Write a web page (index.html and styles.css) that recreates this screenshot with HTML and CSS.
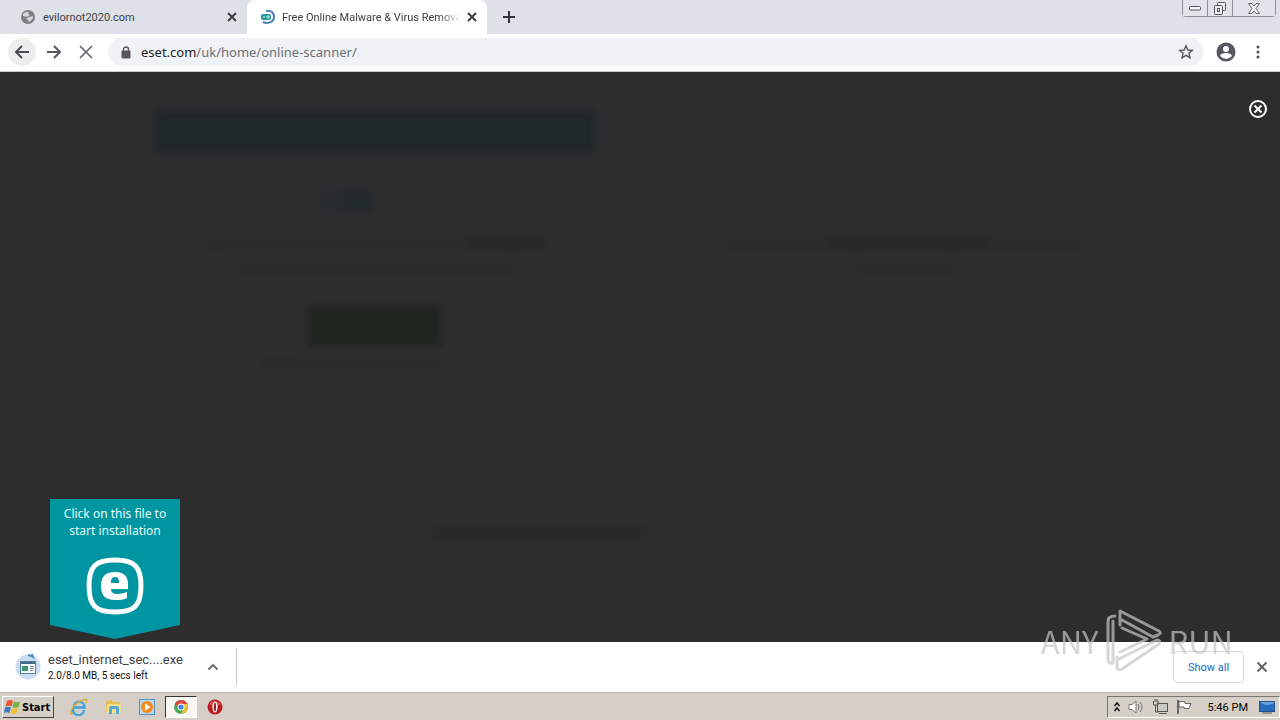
FILE: index.html
```html
<!DOCTYPE html>
<html lang="en">
<head>
<meta charset="utf-8">
<title>Free Online Malware &amp; Virus Removal</title>
<link rel="stylesheet" href="styles.css">
</head>
<body>
<header class="tabs">
  <div class="tab">
    <svg class="favicon" width="16" height="16" viewBox="0 0 16 16"><circle cx="8" cy="8" r="7" fill="#7b7f84"/><path d="M3 5Q6 2 9 3L8 5L10 6L7 8L3 7ZM9 8L13 7Q13 11 9 13L8 11L6 10Z" fill="#d5d8dc"/></svg>
    <span class="tab-title">evilornot2020.com</span>
    <button class="plain" aria-label="Close tab"><svg width="10" height="10" viewBox="0 0 10 10"><path d="M1 1L9 9M9 1L1 9" stroke="#3c4043" stroke-width="2"/></svg></button>
  </div>
  <div class="tab active">
    <svg class="favicon" width="16" height="16" viewBox="0 0 16 16"><rect x="1" y="5" width="10" height="6" rx="2" fill="#2a9aa0"/><path d="M3 8H5M7 7H9V9H7Z" stroke="#c5eceb" fill="none"/><path d="M6 2Q14 1 14 8Q14 14 6 14L3 13" stroke="#477fba" stroke-width="2" fill="none"/></svg>
    <span class="tab-title fade">Free Online Malware &amp; Virus Remova</span>
    <button class="plain" aria-label="Close tab"><svg width="10" height="10" viewBox="0 0 10 10"><path d="M1 1L9 9M9 1L1 9" stroke="#3c4043" stroke-width="2"/></svg></button>
  </div>
  <button class="plain new-tab" aria-label="New tab"><svg width="12" height="12" viewBox="0 0 12 12"><path d="M6 0V12M0 6H12" stroke="#30343a" stroke-width="2"/></svg></button>
  <div class="window-buttons">
    <button aria-label="Minimize"><svg width="12" height="6" viewBox="0 0 12 6"><rect x=".5" y="1.500" width="11" height="3.500" rx="1" fill="#f6f7f9" stroke="#50545c"/></svg></button>
    <button aria-label="Restore"><svg width="14" height="13" viewBox="0 0 14 13"><g fill="#eceef2" stroke="#50545c"><rect x="4.500" y=".5" width="8" height="8" rx="1"/><rect x="1.500" y="3.500" width="8" height="9" rx="1"/><rect x="4.500" y="6.500" width="2" height="3"/></g></svg></button>
    <button class="wide" aria-label="Close"><svg width="12" height="11" viewBox="0 0 12 11"><path d="M.5.5H4L6 3L8 .5H11.500L8 5.500L11.500 10.500H8L6 8L4 10.500H.5L4 5.500Z" fill="#f6f7f9" stroke="#666a72"/></svg></button>
  </div>
</header>
<nav class="toolbar">
  <button class="plain round" aria-label="Back"><svg width="16" height="16" viewBox="0 0 16 16"><path d="M15 8H2M8 2L2 8L8 14" stroke="#494c50" stroke-width="2" fill="none"/></svg></button>
  <button class="plain nav" aria-label="Forward"><svg width="16" height="16" viewBox="0 0 16 16"><path d="M1 8H14M8 2L14 8L8 14" stroke="#55585c" stroke-width="2" fill="none"/></svg></button>
  <button class="plain nav" aria-label="Stop"><svg width="14" height="14" viewBox="0 0 14 14"><path d="M1 1L13 13M13 1L1 13" stroke="#5f6368" stroke-width="1.600"/></svg></button>
  <a class="address" href="#">
    <svg width="10" height="13" viewBox="0 0 10 13"><path d="M2.500 6V3.500a2.500 2.500 0 015 0V6" stroke="#55585d" stroke-width="1.400" fill="none"/><rect x=".5" y="4.500" width="9" height="8" rx="1" fill="#55585d"/></svg>
    <span class="url"><span class="host">eset.com</span>/uk/home/online-scanner/</span>
    <svg width="16" height="16" viewBox="0 0 16 16"><path d="M8 1.800L9.800 6L14.300 6.300L10.900 9.200L12 13.800L8 11.300L4 13.800L5.100 9.200L1.700 6.300L6.200 6Z" stroke="#55585d" stroke-width="1.400" fill="none"/></svg>
  </a>
  <button class="plain" aria-label="Profile"><svg width="20" height="20" viewBox="0 0 20 20"><circle cx="10" cy="10" r="9.500" fill="#55585f"/><circle cx="10" cy="7" r="3" fill="#fff"/><path d="M4 14Q5 11 10 11Q15 11 16 14Q13 17 10 17Q7 17 4 14Z" fill="#fff"/></svg></button>
  <button class="plain menu" aria-label="Menu"><svg width="4" height="14" viewBox="0 0 4 14"><g fill="#4d5055"><circle cx="2" cy="2" r="1.500"/><circle cx="2" cy="7" r="1.500"/><circle cx="2" cy="12" r="1.500"/></g></svg></button>
</nav>
<main class="page">
  <div class="dimmed" aria-hidden="true">
    <section class="column">
      <div class="banner"></div>
      <div class="logo-shape"></div>
      <div class="line w340"><i></i></div>
      <div class="line w280"></div>
      <div class="cta"></div>
      <div class="line w180"></div>
    </section>
    <section class="column right">
      <div class="line w360"><i></i></div>
      <div class="line w100"></div>
      <div class="outline"></div>
    </section>
    <div class="line footer-line"></div>
  </div>
  <button class="plain close-overlay" aria-label="Close"><svg width="20" height="20" viewBox="0 0 20 20"><circle cx="10" cy="10" r="8" stroke="#fff" stroke-width="2" fill="none"/><path d="M6.500 6.500L13.500 13.500M13.500 6.500L6.500 13.500" stroke="#fff" stroke-width="2"/></svg></button>
  <aside class="hint">
    <p>Click on this file to start installation</p>
    <svg width="58" height="58" viewBox="0 0 58 58"><path d="M29 3C48 3 55 9 55 29C55 49 48 55 29 55C10 55 3 49 3 29C3 9 10 3 29 3Z" fill="none" stroke="#fff" stroke-width="5"/><path fill-rule="evenodd" d="M29 15C39 15 43 20 42 32H25C25 36 28 37 32 37C35 37 38 36 41 35V41C37 43 34 43 29 43C19 43 15 38 15 29C15 19 20 15 29 15ZM25 26H33C33 22 32 20 29 20C26 20 25 22 25 26Z" fill="#fff"/></svg>
  </aside>
</main>
<section class="downloads">
  <svg class="file-icon" width="26" height="28" viewBox="0 0 26 28"><circle cx="13" cy="14" r="12.500" fill="#ccdcf2"/><path d="M13 2A12 12 0 0118 4L17 1" stroke="#4b8fc6" stroke-width="2" fill="none"/><rect x="5.500" y="8.500" width="15" height="12" fill="#f9fbfa" stroke="#587e92"/><path d="M6 10H20" stroke="#426985" stroke-width="2"/><rect x="7" y="13" width="6" height="5" fill="#3c9872"/><path d="M15 13.500H19M15 15.500H19M15 17.500H18" stroke="#8292a0"/></svg>
  <div class="file">
    <span class="file-name">eset_internet_sec....exe</span>
    <span class="file-status">2.0/8.0 MB, 5 secs left</span>
  </div>
  <button class="plain expand" aria-label="Download options"><svg width="12" height="8" viewBox="0 0 12 8"><path d="M1.500 6.500L6 2L10.500 6.500" stroke="#6c6f73" stroke-width="2" fill="none"/></svg></button>
  <button class="show-all">Show all</button>
  <button class="plain" aria-label="Close downloads"><svg width="12" height="12" viewBox="0 0 12 12"><path d="M1.500 1.500L10.500 10.500M10.500 1.500L1.500 10.500" stroke="#5f6368" stroke-width="2"/></svg></button>
</section>
<footer class="taskbar">
  <button class="start"><svg width="17" height="16" viewBox="0 0 17 16"><path d="M3 2Q6 0 9 2L7.500 7.500Q4.500 6 1.500 7.500Z" fill="#e7582b"/><path d="M10 2.500Q13 4 16 2.500L14.500 8Q11.500 9.500 8.500 8Z" fill="#72b43b"/><path d="M1 8.500Q4 7 7 8.500L5.500 14Q3 12.500 0 14Z" fill="#3c7cc8"/><path d="M8 9Q11 10.500 14 9L12.500 14Q9.500 16 6.500 14Z" fill="#f5bd2b"/></svg>Start</button>
  <div class="launchers">
    <button class="plain app" aria-label="Internet Explorer"><svg width="18" height="18" viewBox="0 0 18 18"><path d="M14 12A5.500 5.500 0 113.500 9.500H14.500A5.500 5.500 0 003.800 7.500" stroke="#3da4de" stroke-width="2.400" fill="none"/><path d="M3 15Q0 18 1 13Q4 5 13 2Q19 0 16 5" stroke="#d9ac35" stroke-width="1.400" fill="none"/></svg></button>
    <button class="plain app" aria-label="Windows Explorer"><svg width="18" height="18" viewBox="0 0 18 18"><path d="M2 3L8 2L9 4H16V14H2Z" fill="#e4bf55"/><path d="M3 6H17V15H3Z" fill="#f7df8b"/><path d="M5 16V10Q5 8 7 8H13Q15 8 15 10V16H12V11H8V16Z" fill="#55a9d7"/></svg></button>
    <button class="plain app" aria-label="Media Player"><svg width="18" height="18" viewBox="0 0 18 18"><rect x="1.500" y="1.500" width="15" height="15" fill="#b9d8ed" stroke="#5791bd"/><circle cx="9" cy="9" r="6" fill="#f28b18"/><path d="M7 5.500L12.500 9L7 12.500Z" fill="#fff"/></svg></button>
    <button class="plain app pressed" aria-label="Chrome"><svg width="16" height="16" viewBox="0 0 16 16"><circle cx="8" cy="8" r="7" fill="#4aa657"/><path d="M2 4.500A7 7 0 0114.500 5H8L5 9Z" fill="#dd493c"/><path d="M8 5H14.500Q16 13 8 15L11 9Z" fill="#f4c531"/><circle cx="8" cy="8" r="3.500" fill="#fff"/><circle cx="8" cy="8" r="2.600" fill="#4186dc"/></svg></button>
    <button class="plain app" aria-label="Opera"><svg width="16" height="16" viewBox="0 0 16 16"><circle cx="8" cy="8" r="7.500" fill="#b81d20"/><path d="M2 5Q7-1 14 5L8 8Z" fill="#da5b56"/><ellipse cx="8" cy="8" rx="2.500" ry="5.500" fill="#fff"/><ellipse cx="8" cy="8" rx="1" ry="4.500" fill="#96181b"/></svg></button>
  </div>
  <div class="tray">
    <svg width="8" height="12" viewBox="0 0 8 12"><path d="M1.500 5L4 2L6.500 5M1.500 10L4 7L6.500 10" stroke="#111" stroke-width="1.500" fill="none"/></svg>
    <svg width="17" height="16" viewBox="0 0 17 16"><path d="M1 5.500H4L8 2V14L4 10.500H1Z" fill="#fff" stroke="#777"/><path d="M10 5Q12 8 10 11M12 3Q16 8 12 13" stroke="#777" fill="none"/></svg>
    <svg width="17" height="16" viewBox="0 0 17 16"><rect x="5.500" y="4.500" width="10" height="8" fill="#c7cbc8" stroke="#555"/><path d="M7 14.500H15M1.500 2V6H6V2M3.500 6V13H7M3 0V3M5 0V3" stroke="#555" fill="none"/></svg>
    <svg width="17" height="16" viewBox="0 0 17 16"><path d="M2 1V15" stroke="#666" stroke-width="2"/><path d="M3 2.500H9V4.500H15L13 9.500H8V8H3Z" fill="#fff" stroke="#666"/></svg>
    <time>5:46 PM</time>
    <svg width="16" height="14" viewBox="0 0 16 14"><rect x=".5" y="1.500" width="15" height="10" fill="#286bbd" stroke="#24528d"/><path d="M2 3Q8 7 15 3V2H2Z" fill="#67a5df"/><path d="M3 13H13" stroke="#50565e"/></svg>
  </div>
</footer>
<div class="watermark">
  <span>ANY</span>
  <svg width="58" height="64" viewBox="0 0 58 64"><g fill="none" stroke="currentColor" stroke-width="3" stroke-linejoin="round" stroke-linecap="round"><path d="M10 8Q3 8 3 13V51Q3 56 8 55V13"/><path d="M15 17V3L54 23Q57 25 53 27L48 29L17 12"/><path d="M12 49V60Q13 63 17 61L54 36Q56 32 52 32L14 51"/><path d="M17 20L42 31L15 44"/></g></svg>
  <span>RUN</span>
</div>
</body>
</html>
```
FILE: styles.css
```css
* { box-sizing: border-box; }
body {
  position: relative;
  display: flex;
  flex-direction: column;
  min-height: 100vh;
  margin: 0;
  font-family: Roboto, "Noto Sans", sans-serif;
  font-size: 11px;
  color: #333;
}
svg { display: block; flex: none; }
button { font: inherit; color: inherit; }
.plain { display: flex; align-items: center; justify-content: center; padding: 0; border: 0; background: none; }

.tabs { display: flex; height: 34px; background: #dee1e8; }
.tab { display: flex; align-items: center; width: 247px; padding: 0 10px 0 20px; gap: 7px; }
.tab.active { width: 240px; padding-left: 13px; gap: 6px; background: #fff; border-radius: 8px 8px 0 0; }
.tab-title { flex: 1; white-space: nowrap; color: #3c4043; }
.fade { mask-image: linear-gradient(to right, #000 88%, transparent); }
.new-tab { width: 44px; }
.window-buttons { display: flex; height: 17px; margin: 0 4px 0 auto; border: 1px solid #8b8f99; border-top: 0; border-radius: 0 0 4px 4px; }
.window-buttons button { display: flex; align-items: center; justify-content: center; width: 25px; padding: 0; border: 0; border-right: 1px solid #8b8f99; background: #e1e4ea; }
.window-buttons .wide { width: 42px; border-right: 0; }

.toolbar { display: flex; align-items: center; height: 38px; padding: 0 16px 1px 8px; background: #fff; border-bottom: 1px solid #c8cacc; }
.round { width: 28px; height: 28px; border-radius: 14px; background: #eeeeef; }
.nav { width: 32px; height: 28px; }
.round + .nav { margin-left: 2px; }
.address { display: flex; flex: 1; align-items: center; gap: 10px; height: 28px; margin: 0 12px 0 6px; padding: 0 10px 0 13px; border-radius: 14px; background: #f0f3f5; color: #6b6f74; font-family: "Noto Sans", sans-serif; font-size: 13px; text-decoration: none; }
.url { flex: 1; }
.host { color: #202124; }
.menu { width: 12px; margin-left: 16px; }

.page { position: relative; flex: 1; background: #2d2d2d; overflow: hidden; }
.dimmed { display: grid; grid-template-columns: 1fr 1fr; column-gap: 90px; padding: 38px 155px 0; }
.column { display: flex; flex-direction: column; align-items: center; }
.banner { width: 100%; height: 43px; background: #20272b; filter: blur(3px); }
.logo-shape { width: 60px; height: 24px; margin: 36px 60px 24px 0; border-radius: 12px; background: linear-gradient(to right, #2a2d31, #20292d); filter: blur(5px); }
.line { display: flex; justify-content: flex-end; height: 12px; margin-bottom: 12px; background: #2b2b2b; filter: blur(3px); }
.line i { width: 76px; background: #282828; }
.w340 { width: 340px; }
.w280 { width: 280px; }
.w180 { width: 180px; margin-right: 50px; }
.w360 { width: 360px; justify-content: center; }
.w360 i { width: 160px; }
.w100 { width: 100px; }
.cta { width: 134px; height: 42px; margin: 20px 0 12px; background: #20271f; filter: blur(3px); }
.right { padding-top: 127px; }
.outline { width: 172px; height: 46px; margin-top: 20px; border: 4px solid #2b2b2b; filter: blur(2px); }
.footer-line { grid-column: 1 / -1; justify-self: center; width: 610px; margin-top: 144px; background: linear-gradient(to right, #2c2c2c 15%, #292929 18%, #292929 48%, #2c2c2c 52%); }
.close-overlay { position: absolute; top: 27px; right: 12px; }
.hint { position: absolute; left: 50px; bottom: 3px; display: flex; flex-direction: column; align-items: center; gap: 18px; width: 130px; height: 140px; padding: 6px 8px; background: #0096a1; clip-path: polygon(0 0, 100% 0, 100% 90%, 50% 100%, 0 90%); color: #e6fbfc; }
.hint p { margin: 0; font-family: "Noto Sans", sans-serif; font-size: 12px; line-height: 17px; text-align: center; }

.downloads { display: flex; align-items: center; height: 50px; padding: 0 12px 0 15px; background: #fff; }
.file { display: flex; flex-direction: column; width: 145px; margin-left: 7px; }
.file-name { font-size: 13px; line-height: 17px; color: #3c4043; white-space: nowrap; }
.file-status { font-size: 10px; line-height: 15px; color: #111; white-space: nowrap; }
.expand { width: 44px; height: 38px; padding-right: 4px; border-right: 1px solid #c7c9cb; }
.show-all { width: 71px; height: 32px; margin: 0 12px 0 auto; padding: 0; border: 1px solid #d7d9dc; border-radius: 4px; background: #fff; color: #1967c0; }

.taskbar { display: flex; align-items: center; height: 28px; padding: 1px 0 0 2px; border-top: 1px solid #b6b4ae; background: #d5cfc7; }
.start { display: flex; align-items: center; gap: 1px; height: 22px; width: 52px; padding: 0 1px; border: 1px solid; border-color: #fff #444 #444 #fff; background: #d5cfc7; color: #000; font: bold 11px "DejaVu Sans Condensed", "DejaVu Sans", sans-serif; }
.launchers { display: flex; gap: 2px; margin-left: 9px; }
.app { width: 32px; height: 22px; }
.pressed { border: 1px solid; border-color: #333 #fff #fff #333; background: #f8f7f5; }
.tray { display: flex; align-items: center; gap: 7px; height: 22px; margin-left: auto; padding: 0 4px 0 5px; border: 1px solid; border-color: #77736d #fff #fff #77736d; color: #000; }
.tray time { margin: 0 4px 0 8px; }

.watermark { position: absolute; right: 47px; bottom: 48px; display: flex; align-items: center; gap: 6px; color: #c6c6c6; font: 31px/1 "Noto Sans CJK SC", "Liberation Sans", sans-serif; opacity: .7; pointer-events: none; }
```
